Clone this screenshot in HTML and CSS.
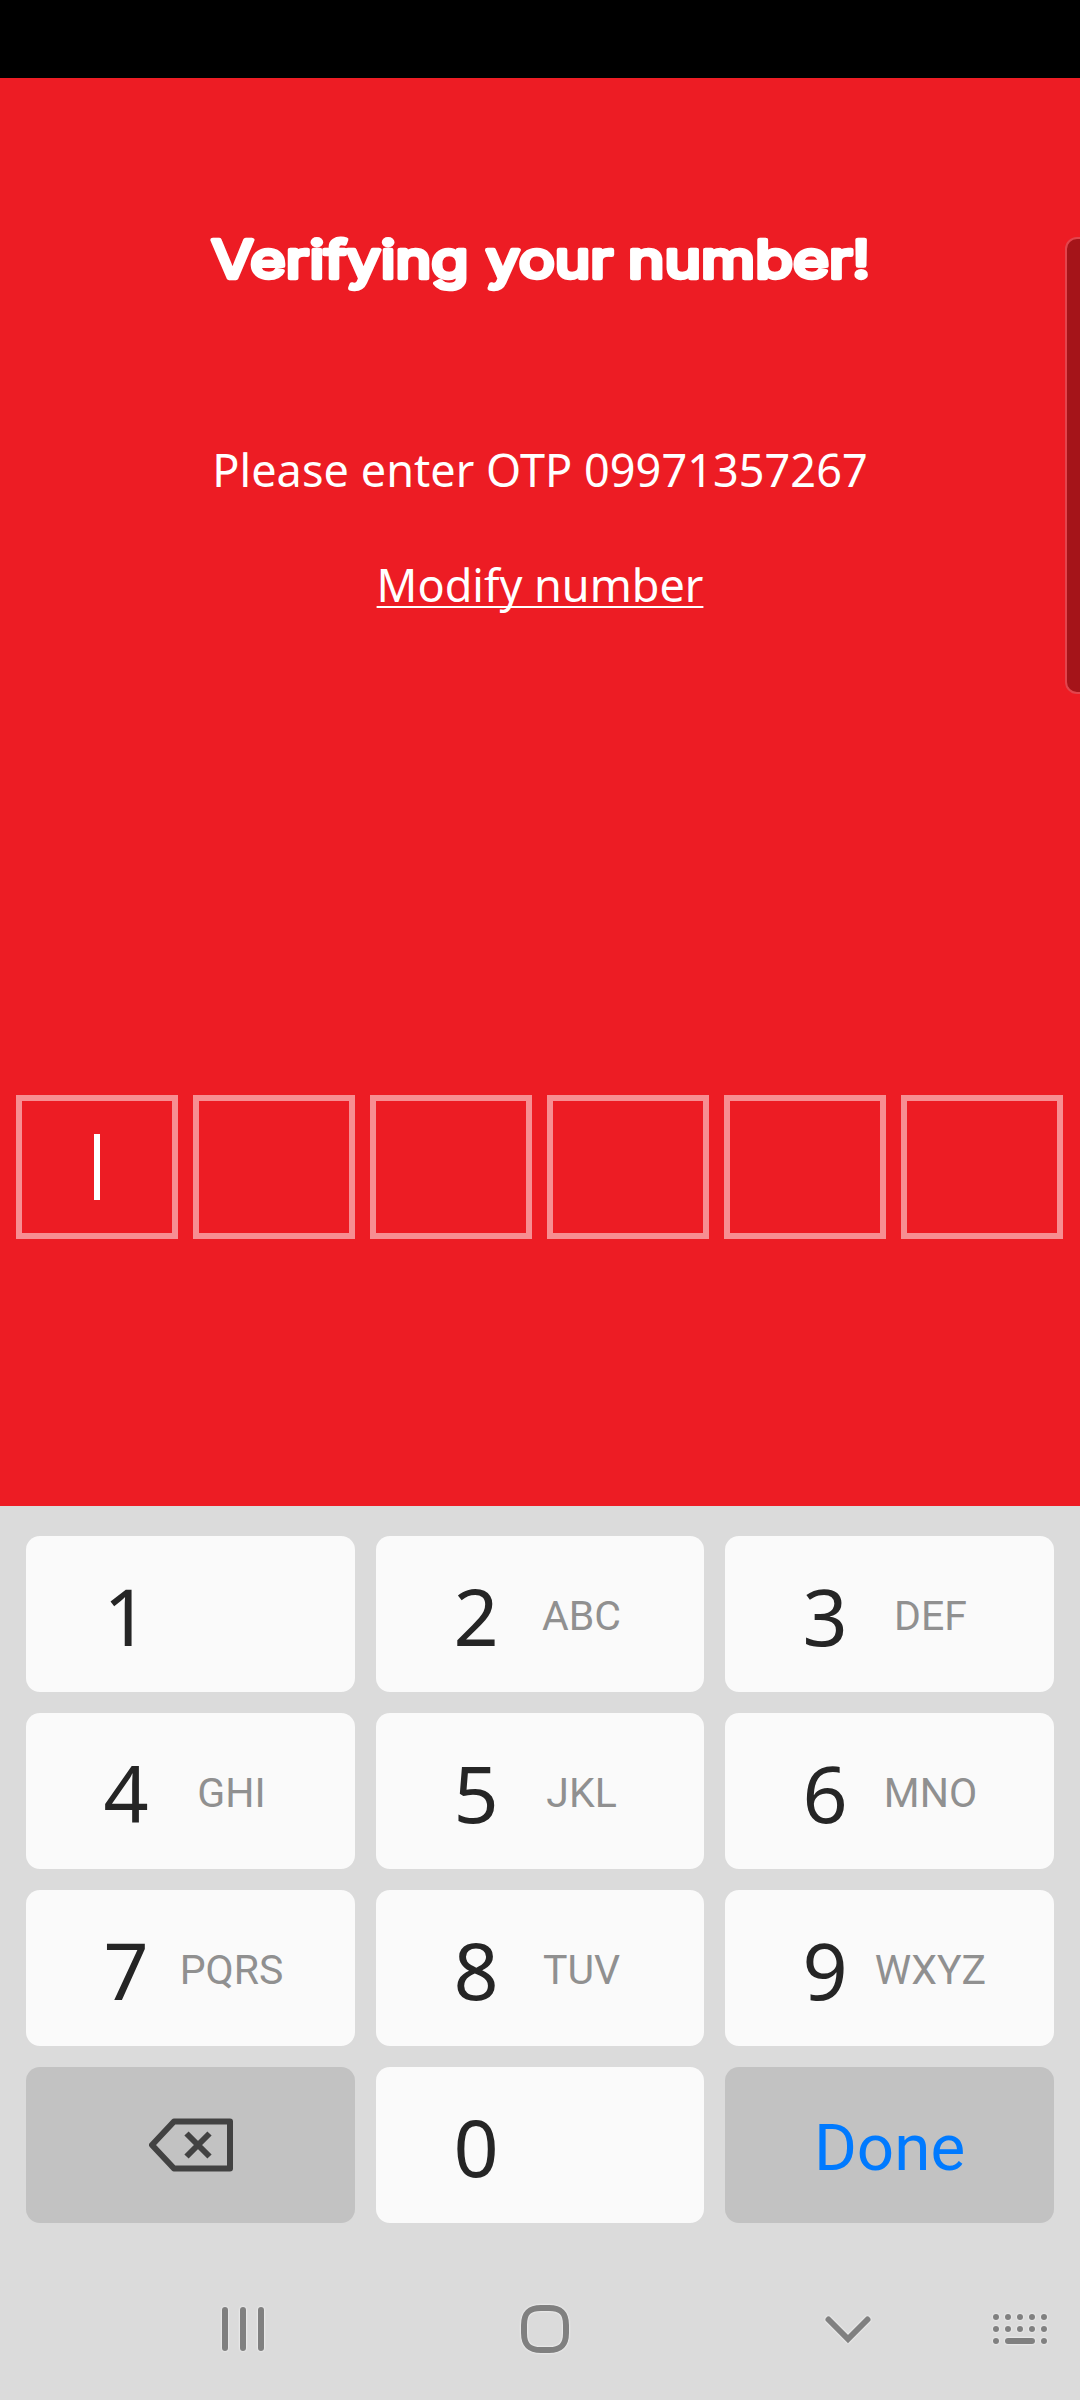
FILE: index.html
```html
<!DOCTYPE html>
<html lang="en">
<head>
<meta charset="utf-8">
<title>Verifying your number</title>
<link rel="stylesheet" href="styles.css">
</head>
<body>
<div class="status-bar"></div>
<main class="screen">
  <h1 class="title">
    <svg class="title-art" width="680" height="80" viewBox="0 0 680 80">
      <text x="11.500" y="53.500" textLength="257" lengthAdjust="spacingAndGlyphs">Verifying</text>
      <text x="286" y="53.500" textLength="127" lengthAdjust="spacingAndGlyphs">your</text>
      <text x="428" y="53.500" textLength="242" lengthAdjust="spacingAndGlyphs">number!</text>
    </svg>
  </h1>
  <p class="prompt">Please enter OTP 09971357267</p>
  <a class="modify">Modify number</a>
  <div class="otp">
    <span class="otp-box"><i class="caret"></i></span>
    <span class="otp-box"></span>
    <span class="otp-box"></span>
    <span class="otp-box"></span>
    <span class="otp-box"></span>
    <span class="otp-box"></span>
  </div>
  <div class="edge-handle"></div>
</main>
<section class="keyboard">
  <div class="keys">
    <div class="key"><span class="digit">1</span></div>
    <div class="key"><span class="digit">2</span><span class="letters">ABC</span></div>
    <div class="key"><span class="digit">3</span><span class="letters">DEF</span></div>
    <div class="key"><span class="digit">4</span><span class="letters">GHI</span></div>
    <div class="key"><span class="digit">5</span><span class="letters">JKL</span></div>
    <div class="key"><span class="digit">6</span><span class="letters">MNO</span></div>
    <div class="key"><span class="digit">7</span><span class="letters">PQRS</span></div>
    <div class="key"><span class="digit">8</span><span class="letters">TUV</span></div>
    <div class="key"><span class="digit">9</span><span class="letters">WXYZ</span></div>
    <div class="key key-action">
      <svg width="84" height="54" viewBox="0 0 84 54" fill="none" stroke="#424242" stroke-width="6" stroke-linejoin="round">
        <path d="M25 3.500H81V50.500H25L3 27Z"/>
        <path d="M37.500 15.500L60.500 38.500M60.500 15.500L37.500 38.500"/>
      </svg>
    </div>
    <div class="key"><span class="digit">0</span></div>
    <div class="key key-action"><span class="done">Done</span></div>
  </div>
  <nav class="nav">
    <svg class="icon" width="44" height="48" viewBox="0 0 44 48" stroke="#808080" stroke-width="6" stroke-linecap="round">
      <path d="M4 5V43M22 5V43M40 5V43"/>
    </svg>
    <svg class="icon" width="48" height="48" viewBox="0 0 48 48" fill="none" stroke="#808080" stroke-width="6">
      <path d="M24 3H28C40 3 45 8 45 20V28C45 40 40 45 28 45H20C8 45 3 40 3 28V20C3 8 8 3 20 3Z"/>
    </svg>
    <svg class="icon" width="48" height="48" viewBox="0 0 48 48" fill="none" stroke="#808080" stroke-width="6" stroke-linecap="round">
      <path d="M4.500 14.500L24 34L43.500 14.500"/>
    </svg>
    <svg class="icon" width="56" height="48" viewBox="0 0 56 48" fill="none" stroke="#808080" stroke-width="6" stroke-linecap="round">
      <path d="M4 12h0M16 12h0M28 12h0M40 12h0M52 12h0M4 24h0M16 24h0M28 24h0M40 24h0M52 24h0M4 36h0M16 36H40M52 36h0"/>
    </svg>
  </nav>
</section>
</body>
</html>
```
FILE: styles.css
```css
* {
  box-sizing: border-box;
}

body {
  margin: 0;
  width: 1080px;
  height: 2400px;
  overflow: hidden;
  display: flex;
  flex-direction: column;
}

.status-bar {
  height: 78px;
  background: #000;
}

.screen {
  position: relative;
  height: 1428px;
  background: #ed1c24;
  color: #fff;
  display: flex;
  flex-direction: column;
  align-items: center;
}

.title {
  margin: 146px 0 0;
  height: 80px;
}

.title-art {
  display: block;
  font: 400 52px Inter, sans-serif;
  fill: #fff;
  stroke: #fff;
  stroke-width: 4.5px;
  stroke-linejoin: round;
  stroke-linecap: round;
}

.prompt {
  margin: 135px 0 0;
  font: 400 45px/62px "Noto Sans", sans-serif;
  letter-spacing: 0.05px;
  white-space: nowrap;
}

.modify {
  margin-top: 53px;
  font: 400 45px/62px "Noto Sans", sans-serif;
  text-decoration: underline;
  text-decoration-thickness: 2px;
  text-underline-offset: 4px;
  text-decoration-skip-ink: none;
}

.otp {
  align-self: stretch;
  display: flex;
  gap: 15px;
  margin-top: 479px;
  padding: 0 17px 0 16px;
}

.otp-box {
  width: 162px;
  height: 144px;
  border: 6px solid #f78e92;
  display: flex;
  align-items: center;
  justify-content: center;
}

.caret {
  width: 6px;
  height: 66px;
  background: #fff;
}

.edge-handle {
  position: absolute;
  left: 1065px;
  top: 159px;
  width: 40px;
  height: 457px;
  border: 2px solid #e2444c;
  border-radius: 12px;
  background: #a51419;
}

.keyboard {
  height: 894px;
  background: #dbdbdb;
  padding-top: 30px;
}

.keys {
  display: grid;
  grid-template-columns: 329px 328px 329px;
  grid-auto-rows: 156px;
  gap: 21px;
  padding-left: 26px;
}

.key {
  background: #fafafa;
  border-radius: 14px;
  display: flex;
  align-items: baseline;
  padding-left: 70px;
}

.digit {
  width: 60px;
  text-align: center;
  font: 400 79px/160px "Noto Sans", sans-serif;
  color: #252525;
}

.letters {
  width: 130px;
  margin-left: 10.5px;
  text-align: center;
  font: 400 41px/48px Roboto, sans-serif;
  color: #909090;
  transform: translateY(-16px);
}

.key-action {
  background: #c2c2c2;
  align-items: center;
  justify-content: center;
  padding: 0;
}

.done {
  padding-top: 5px;
  font: 400 65.5px/78px Roboto, sans-serif;
  color: #007aff;
}

.nav {
  display: flex;
  align-items: center;
  margin-top: 82px;
  padding-left: 221px;
}

.icon {
  display: block;
  filter: drop-shadow(0 0 1px #fff);
}

.icon:nth-child(2) {
  margin-left: 256px;
}

.icon:nth-child(3) {
  margin-left: 255px;
}

.icon:nth-child(4) {
  margin-left: 120px;
}
```
